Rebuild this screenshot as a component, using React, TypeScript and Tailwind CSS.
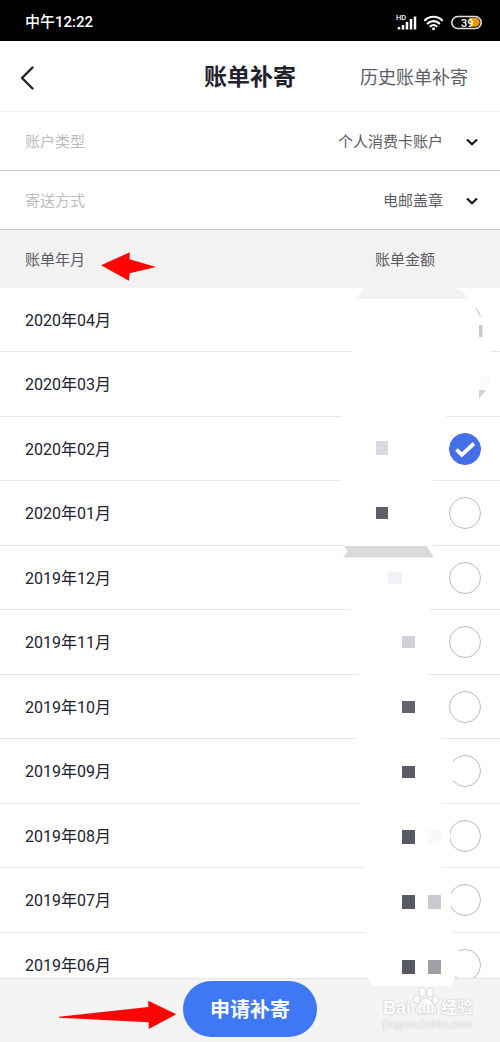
import { useState } from "react";

type Bill = {
  id: string;
  month: string;
};

const bills: Bill[] = [
  { id: "202004", month: "2020年04月" },
  { id: "202003", month: "2020年03月" },
  { id: "202002", month: "2020年02月" },
  { id: "202001", month: "2020年01月" },
  { id: "201912", month: "2019年12月" },
  { id: "201911", month: "2019年11月" },
  { id: "201910", month: "2019年10月" },
  { id: "201909", month: "2019年09月" },
  { id: "201908", month: "2019年08月" },
  { id: "201907", month: "2019年07月" },
  { id: "201906", month: "2019年06月" },
];

export default function App() {
  const [selected, setSelected] = useState<string[]>(["202002"]);

  const toggle = (id: string) =>
    setSelected((prev) =>
      prev.includes(id) ? prev.filter((x) => x !== id) : [...prev, id]
    );

  return (
    <div className="relative flex h-dvh flex-col overflow-hidden bg-white font-[Roboto,'Noto_Sans_CJK_SC',sans-serif] text-[#22222e]">
      <StatusBar />

      {/* HEADER */}
      <header className="grid h-[71px] shrink-0 grid-cols-[1fr_auto_1fr] items-center border-b border-[#f0f0f0] px-5 pt-1">
        <button aria-label="返回" className="w-4">
          <svg viewBox="0 0 16 24" className="h-6 w-4" fill="none">
            <path
              d="M12.500 1.500 2 12l10.500 10.500"
              stroke="#22222e"
              strokeWidth="2.4"
              strokeLinecap="round"
              strokeLinejoin="round"
            />
          </svg>
        </button>
        <h1 className="text-[23px] font-bold">账单补寄</h1>
        <a href="#history" className="mr-3 justify-self-end text-lg text-[#5c5c66]">
          历史账单补寄
        </a>
      </header>

      <SelectRow id="account" label="账户类型" value="个人消费卡账户" />
      <SelectRow id="delivery" label="寄送方式" value="电邮盖章" />

      {/* BILL LIST */}
      <main className="min-h-0 flex-1 overflow-y-auto [scrollbar-width:none]">
        <table className="w-full table-fixed border-separate border-spacing-0 text-left">
          <thead>
            <tr className="h-[58px] bg-[#f2f2f2] text-[15px] text-[#5c5c66]">
              <th className="pl-[25px] pt-[2px] font-normal">
                <div className="relative">
                  账单年月
                  <svg
                    viewBox="0 0 55 29"
                    className="absolute left-[76px] top-[3px] h-[29px] w-[55px]"
                  >
                    <path d="M0 13.3 28.7.3v7L55 15l-26.3 6.3-.7 7.4z" fill="#fb0505" />
                  </svg>
                </div>
              </th>
              <th className="w-[74px] pt-[2px] font-normal">账单金额</th>
              <th className="w-[51px]" />
            </tr>
          </thead>
          <tbody>
            {bills.map((bill) => (
              <tr key={bill.id} className="h-16 even:h-[65px]">
                <td className="border-b border-[#e8e8e8] pl-[25px] pt-[2px]">
                  <label htmlFor={bill.id}>{bill.month}</label>
                </td>
                <td className="border-b border-[#e8e8e8]" />
                <td className="border-b border-[#e8e8e8]">
                  <BillCheck
                    id={bill.id}
                    checked={selected.includes(bill.id)}
                    onChange={() => toggle(bill.id)}
                  />
                </td>
              </tr>
            ))}
          </tbody>
        </table>
      </main>

      {/* FOOTER */}
      <footer className="relative flex h-16 shrink-0 justify-center border-t border-[#e6e6e6] bg-[#f4f4f4] pt-[2px]">
        <svg
          viewBox="0 0 118 29"
          className="absolute left-[59px] top-[21px] h-[29px] w-[118px]"
        >
          <path
            d="M0 16.7 89.3 7V.7l28 13.6L89.7 29v-6.7L0 17.7z"
            fill="#fb0505"
          />
        </svg>
        <button className="h-14 rounded-full bg-[#3f78f5] px-[27px] pt-[2px] text-xl font-bold text-white">
          申请补寄
        </button>
      </footer>

      <MosaicOverlay />
      <Watermark />
    </div>
  );
}

// STATUS BAR
function StatusBar() {
  return (
    <div className="flex h-[41px] shrink-0 items-center justify-between bg-black pl-[25px] pr-[18px] pt-[2px] text-white">
      <span className="text-[15px] font-medium leading-5">中午12:22</span>
      <svg viewBox="0 0 86 18" className="h-[18px] w-[86px]" fill="none">
        <text x="0" y="7" fontSize="7.5" fontWeight="500" fill="#fff">
          HD
        </text>
        <path
          d="M3 14V16.500M7 12V16.500M11 9V16.500M15 6V16.500M19 3.500V16.500"
          stroke="#fff"
          strokeWidth="2.5"
        />
        <path
          d="M29 7.200a12.200 12.200 0 0 1 17 0M31.800 10.400a8.200 8.200 0 0 1 11.400 0M34.500 13.300a4.300 4.300 0 0 1 6 0"
          stroke="#fff"
          strokeWidth="2.2"
          strokeLinecap="round"
        />
        <circle cx="37.5" cy="15.8" r="1.5" fill="#fff" />
        <path d="M73.500 4.800h5.700a4.500 4.500 0 0 1 0 9H73.500z" fill="#e8970f" />
        <rect x="55.8" y="3.5" width="29.4" height="12" rx="6" stroke="#e2e2e2" strokeWidth="1.6" />
        <text x="65" y="13.500" fontSize="11" fontWeight="500" fill="#fff">
          39
        </text>
      </svg>
    </div>
  );
}

// DROP-DOWN ROW
function SelectRow({ id, label, value }: { id: string; label: string; value: string }) {
  return (
    <div className="flex h-[59px] shrink-0 items-center border-b border-[#c8c8c8] pl-[25px] pr-[22px] pt-[2px] text-[15px]">
      <label htmlFor={id} className="flex-1 text-[#bcbcc0]">
        {label}
      </label>
      <select id={id} className="appearance-none bg-transparent text-[#5c5c66]">
        <option>{value}</option>
      </select>
      <svg viewBox="0 0 12 8" className="ml-[22px] h-2 w-3" fill="none">
        <path d="M1 1.500 6 6.300l5-4.800" stroke="#15151c" strokeWidth="2.2" />
      </svg>
    </div>
  );
}

// ROUND CHECKBOX
function BillCheck({
  id,
  checked,
  onChange,
}: {
  id: string;
  checked: boolean;
  onChange: () => void;
}) {
  return (
    <span className="relative block size-8">
      <input
        id={id}
        type="checkbox"
        checked={checked}
        onChange={onChange}
        className="block size-8 appearance-none rounded-full border border-[#bdbdbd] bg-white checked:border-[#436fe8] checked:bg-[#436fe8]"
      />
      {checked && (
        <svg
          viewBox="0 0 32 32"
          className="pointer-events-none absolute inset-0 size-8"
          fill="none"
        >
          <path d="m7.500 16.500 5.200 5.300L25 10.500" stroke="#fff" strokeWidth="3.8" />
        </svg>
      )}
    </span>
  );
}

// Hides the amounts with a white brush and leaves a few mosaic blocks
function MosaicOverlay() {
  return (
    <svg
      viewBox="340 288 160 700"
      className="pointer-events-none absolute right-0 top-[288px] h-[700px] w-40"
    >
      <path
        d="M356 288H486L490 352 484 412 447 416 433 428V545L430 610 428 674 443 739 446 757H453V782L441 803V824H450V846L441 867 451 888V910L453 932 459 945V953L455 976Q455 986 445 986H378Q368 986 368 976L366 932 364 867 360 803 356 739 359 674 352 610 346 560 341 480 342 416 352 352Z"
        fill="#fff"
      />
      <path d="M365 288H454Q463 291 469 299H356Q360 292 365 288Z" fill="#f2f2f2" />
      <path d="M344 546H427L434 557.500H343L348 551Z" fill="#dadada" />
      <path d="M475 307q5 4 6 11l-2-3z" fill="#c9c9c9" />
      <rect x="479" y="325" width="3.5" height="12" fill="#c9c9c9" />
      <rect x="479" y="377" width="11" height="11" fill="#fafafa" />
      <path d="M479 390h7l-7 9z" fill="#d2d2d2" />

      <rect x="376" y="441" width="12" height="14" fill="#d9dae0" />
      <rect x="376" y="507" width="12" height="12" fill="#5f5f69" />
      <rect x="388" y="572" width="14" height="12" fill="#f1f2f6" />
      <rect x="402" y="636" width="13" height="12" fill="#d0d1d8" />
      <rect x="402" y="701" width="13" height="12" fill="#63626e" />
      <rect x="402" y="766" width="13" height="12" fill="#5c5b68" />
      <rect x="402" y="830" width="13" height="14" fill="#575965" />
      <rect x="428" y="830" width="13" height="13" fill="#f7f9fd" />
      <rect x="402" y="895" width="13" height="14" fill="#575965" />
      <rect x="428" y="895" width="13" height="14" fill="#c9cad1" />
      <rect x="402" y="960" width="13" height="14" fill="#575965" />
      <rect x="428" y="960" width="13" height="14" fill="#a0a1a8" />
    </svg>
  );
}

function Watermark() {
  return (
    <div className="pointer-events-none absolute bottom-3 right-[27px] font-['Liberation_Sans','Noto_Sans_CJK_SC',sans-serif] text-white [text-shadow:0_0_1px_#bbb,0_0_2px_#c4c4c4]">
      <div className="flex h-8 items-end gap-[2px]">
        <span className="text-lg font-bold leading-5">Bai</span>
        <span className="relative flex h-8 w-[26px] items-end justify-center">
          <svg
            viewBox="0 0 26 32"
            className="absolute inset-0 h-8 w-[26px]"
            fill="#fff"
            stroke="#cfcfcf"
            strokeWidth="0.8"
          >
            <ellipse cx="3.8" cy="13.5" rx="3.3" ry="4" />
            <ellipse cx="9.5" cy="6" rx="3.3" ry="4.4" />
            <ellipse cx="17" cy="6.3" rx="3.2" ry="4.3" />
            <ellipse cx="22.4" cy="14" rx="3.2" ry="4" />
            <path d="M13 12c3.500 0 4.500 3 6.700 5.200C22 19.500 24 21 23.500 24.500c-.6 4-4.500 4.300-7 3.700-2.300-.5-4.700-.5-7 0-2.500.6-6.300.3-7-3.700C2 21 4.200 19.500 6.400 17.200 8.500 15 9.500 12 13 12Z" />
          </svg>
          <span className="relative text-sm font-bold leading-5">du</span>
        </span>
        <span className="text-base font-bold leading-5">经验</span>
      </div>
      <div className="text-[11px] leading-3">jingyan.baidu.com</div>
    </div>
  );
}
